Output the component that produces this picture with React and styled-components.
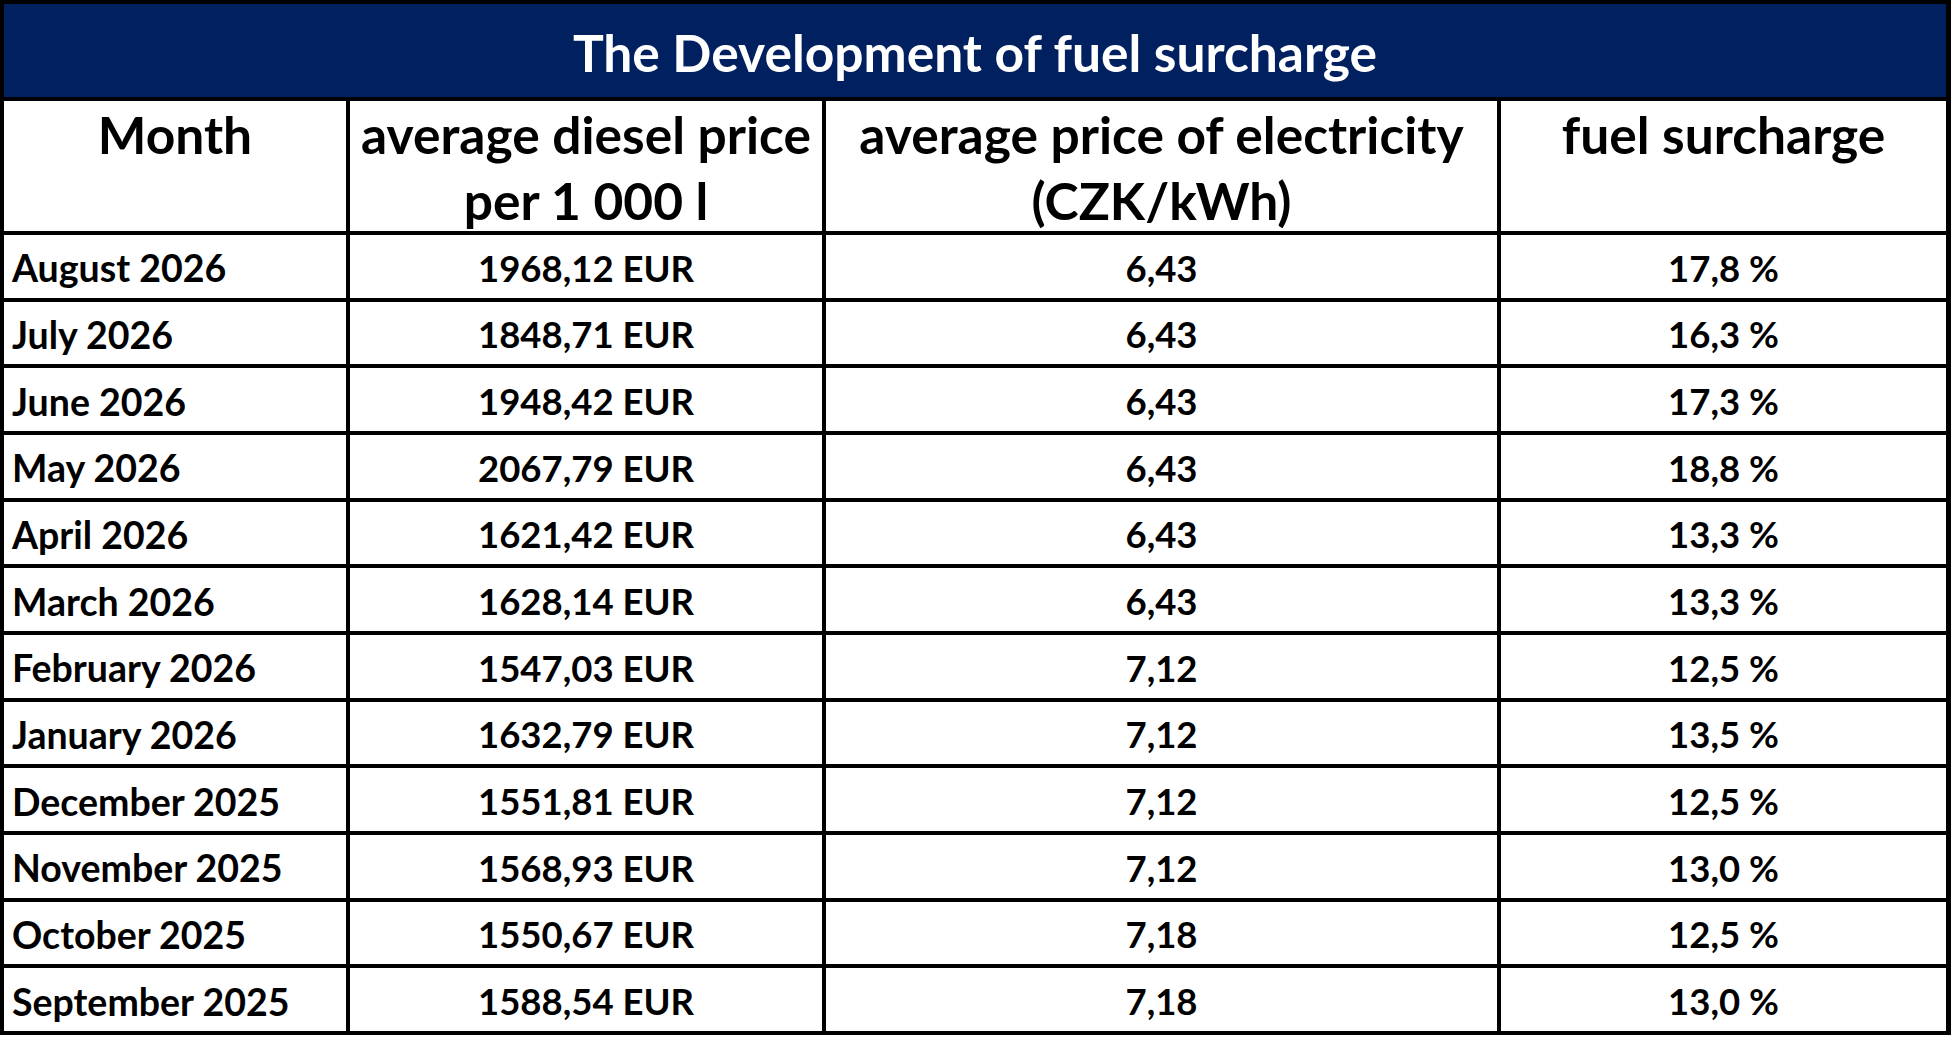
import React from "react";
import styled, { createGlobalStyle } from "styled-components";

const GlobalStyle = createGlobalStyle`
  html, body {
    margin: 0;
    padding: 0;
    background: #ffffff;
  }
  body {
    font-family: Lato, "Open Sans", Arial, sans-serif;
    color: #000000;
  }
`;

const Sheet = styled.div`
  display: grid;
  grid-template-columns: 342px 472px 671px 445px;
  grid-template-rows: 93px 130px repeat(12, 62.67px);
  gap: 4px;
  padding: 4px 5px 4px 4px;
  background: #000000;
  width: max-content;
`;

const TitleCell = styled.div`
  grid-column: 1 / -1;
  background: #002060;
  color: #ffffff;
  display: flex;
  align-items: center;
  justify-content: center;
  padding-top: 3px;
  font-size: 51.5px;
  font-weight: 700;
  white-space: nowrap;
`;

const HeaderCell = styled.div`
  background: #ffffff;
  text-align: center;
  font-size: 51.5px;
  font-weight: 700;
  line-height: 66px;
  white-space: nowrap;
`;

const DataCell = styled.div`
  background: #ffffff;
  display: flex;
  align-items: center;
  justify-content: ${(p) => (p.$left ? "flex-start" : "center")};
  padding: 3px 0 0 ${(p) => (p.$left ? "8px" : "0")};
  font-size: ${(p) => (p.$left ? "37.5px" : "36.5px")};
  font-weight: 700;
  white-space: nowrap;
`;

const rows = [
  ["August 2026", "1968,12 EUR", "6,43", "17,8 %"],
  ["July 2026", "1848,71 EUR", "6,43", "16,3 %"],
  ["June 2026", "1948,42 EUR", "6,43", "17,3 %"],
  ["May 2026", "2067,79 EUR", "6,43", "18,8 %"],
  ["April 2026", "1621,42 EUR", "6,43", "13,3 %"],
  ["March 2026", "1628,14 EUR", "6,43", "13,3 %"],
  ["February 2026", "1547,03 EUR", "7,12", "12,5 %"],
  ["January 2026", "1632,79 EUR", "7,12", "13,5 %"],
  ["December 2025", "1551,81 EUR", "7,12", "12,5 %"],
  ["November 2025", "1568,93 EUR", "7,12", "13,0 %"],
  ["October 2025", "1550,67 EUR", "7,18", "12,5 %"],
  ["September 2025", "1588,54 EUR", "7,18", "13,0 %"],
];

export default function App() {
  return (
    <>
      <GlobalStyle />
      <Sheet role="table">
        <TitleCell role="caption">The Development of fuel surcharge</TitleCell>
        <HeaderCell role="columnheader">Month</HeaderCell>
        <HeaderCell role="columnheader">
          average diesel price
          <br />
          per 1 000 l
        </HeaderCell>
        <HeaderCell role="columnheader">
          average price of electricity
          <br />
          (CZK/kWh)
        </HeaderCell>
        <HeaderCell role="columnheader">fuel surcharge</HeaderCell>
        {rows.map((r) => (
          <React.Fragment key={r[0]}>
            <DataCell $left role="cell">{r[0]}</DataCell>
            <DataCell role="cell">{r[1]}</DataCell>
            <DataCell role="cell">{r[2]}</DataCell>
            <DataCell role="cell">{r[3]}</DataCell>
          </React.Fragment>
        ))}
      </Sheet>
    </>
  );
}
